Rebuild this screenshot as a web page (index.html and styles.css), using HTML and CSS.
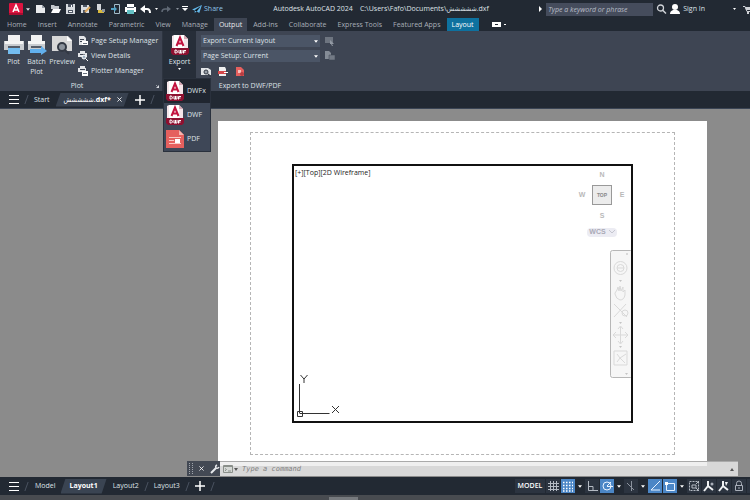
FILE: index.html
```html
<!DOCTYPE html>
<html lang="en">
<head>
<meta charset="utf-8">
<title>Autodesk AutoCAD 2024</title>
<link rel="stylesheet" href="styles.css">
</head>
<body>
<svg class="defs" aria-hidden="true">
  <symbol id="caret" viewBox="0 0 6 4"><path fill="currentColor" d="M0 0h6L3 4z"/></symbol>
  <symbol id="printer" viewBox="0 0 20 20"><path fill="#f2f2f2" d="M4 0h12v7H4z"/><path fill="#c9ccd0" d="M0 6h20v9H0z"/><path fill="#f4f4f4" d="M1 6h18v3H1z"/><path fill="#555c68" d="M4 11h12v2H4z"/><path fill="#74bdf0" d="M4 13h12v6H4z"/></symbol>
  <symbol id="batch" viewBox="0 0 20 20"><path fill="#f2f2f2" d="M4 0h11v6H4z"/><path fill="#c9ccd0" d="M1 6h17v9H1z"/><path fill="#f4f4f4" d="M1 6h17v3H1z"/><path fill="#555c68" d="M4 11h11v2H4z"/><path fill="#62b0ed" d="M3 14h11v-3l6 5-6 4v-2H3z"/></symbol>
  <symbol id="preview" viewBox="0 0 20 20"><path fill="#d8d8d8" d="M0 1h16l4 4v11H0z"/><path fill="#fff" d="M15 1l5 5h-5z"/><circle cx="10" cy="12" r="4" fill="#8c939c" stroke="#343a45" stroke-width="2"/><path stroke="#343a45" stroke-width="2" d="M13 15l4 4"/></symbol>
  <symbol id="pagesetup" viewBox="0 0 10 10"><path fill="#e3e5e8" d="M1 0h5l2 2v7H1z"/><path fill="#3e4553" d="M2 3h4v1H2zM2 5h2v1H2z"/><path fill="#fff" d="M4 5h6v4H4z"/><path fill="#6b7380" d="M5 7h4v1H5z"/></symbol>
  <symbol id="details" viewBox="0 0 10 10"><path fill="#e3e5e8" d="M2 0h5v2h2v4H0V2h2z"/><path fill="#3e4553" d="M2 3h5v1H2z"/><circle cx="6" cy="6" r="2" fill="#9fb0c0" stroke="#fff"/><path stroke="#fff" d="M7.500 7.500L10 10"/></symbol>
  <symbol id="plotter" viewBox="0 0 10 10"><path fill="#e3e5e8" d="M2 0h5v2h1v4H0V2h2z"/><path fill="#3e4553" d="M2 3h5v1H2z"/><path fill="#fff" d="M4 5h6v5H4z"/><path fill="#6b7380" d="M5 7h4v1H5z"/></symbol>
  <symbol id="dwf" viewBox="0 0 18 20"><path fill="#f6e6ea" d="M1 1l2-1h10l4 4v11H1z"/><path fill="#fff" d="M3 0h10v13H3z"/><path fill="#d9a9b5" d="M13 0l4 4h-4z"/><path fill="none" stroke="#c3123f" stroke-width="2" d="M5.500 11L9 2.500l3.500 8.500M6.500 8.500h5"/><path fill="#8d1030" d="M0 13h18v5l-2 2H2l-2-2z"/><path fill="none" stroke="#fff" d="M4 15v3h1.500l1-1-1-2zM8 15v3h3v-3M9.500 15v3M15 15.500h-2.500V18.500M12.500 17h2"/></symbol>
  <symbol id="pdf" viewBox="0 0 18 20"><path fill="#e5605e" d="M0 1h13l5 5v13H0z"/><path fill="#f7b3ae" d="M13 1l5 5h-5z"/><path stroke="#f9c9c5" d="M3 8.500h12M3 11.500h5M3 14.500h12"/><path fill="#fff" d="M9 10h5v4H9z"/></symbol>
  <symbol id="plus" viewBox="0 0 10 10"><path stroke="currentColor" stroke-width="1.500" d="M5 0v10M0 5h10"/></symbol>
  <symbol id="burger" viewBox="0 0 10 9"><path stroke="currentColor" d="M0 .5h10M0 4.500h10M0 8.500h10"/></symbol>
  <symbol id="cross" viewBox="0 0 6 6"><path stroke="currentColor" d="M.5.5l5 5M5.500.5l-5 5"/></symbol>
</svg>

<header class="titlebar">
  <div class="quick">
    <button class="logo" aria-label="Application menu"><svg viewBox="0 0 14 12"><rect width="14" height="12" rx="1" fill="#dc1440"/><path fill="#a90d30" d="M0 10h14v2H0z"/><path fill="none" stroke="#fff" stroke-width="1.500" d="M4 9l3-7 3 7M5 7h4"/></svg></button>
    <svg class="tiny"><use href="#caret"/></svg>
    <button class="qb" aria-label="New"><svg viewBox="0 0 11 10"><path fill="#e9ebed" d="M1 1h6l3 3v5H1z"/><path fill="#9aa1aa" d="M7 1l3 3H7z"/></svg></button>
    <button class="qb" aria-label="Open"><svg viewBox="0 0 11 10"><path fill="#c4c8cd" d="M1 1h3l1 1h4v3H1z"/><path fill="#fff" d="M3 5h8L9 9H1z"/></svg></button>
    <button class="qb" aria-label="Save"><svg viewBox="0 0 11 10"><path fill="#d8dbdf" d="M1 0h9v10H1z"/><path fill="#4e5663" d="M3 0h5v3H3zM3 6h5v3H3z"/><path fill="#fff" d="M6 1h1v2H6zM4 7h3v1H4z"/></svg></button>
    <button class="qb" aria-label="Save As"><svg viewBox="0 0 11 10"><path fill="#d8dbdf" d="M1 1h8v8H1z"/><path fill="#4e5663" d="M3 1h4v2H3zM3 6h3v3H3z"/><path stroke="#dda85e" stroke-width="2" d="M5 8l5-5"/></svg></button>
    <button class="qb" aria-label="Open from web"><svg viewBox="0 0 11 10"><path fill="#d5d7db" d="M2 0h4v6H2z"/><path fill="#d9ba3e" d="M3 6h6v3H3z"/><path fill="#8c939d" d="M7 5h3v3H7z"/></svg></button>
    <button class="qb" aria-label="Save to mobile"><svg viewBox="0 0 11 10"><path fill="none" stroke="#a5bcc9" d="M4.500.5h5v9h-5z"/><path fill="#55a3c5" d="M1 4h3V2l3 3-3 3V6H1z"/></svg></button>
    <button class="qb" aria-label="Print"><svg viewBox="0 0 11 10"><path fill="#fff" d="M2 0h7v3h2v5H0V3h2z"/><path fill="#59616d" d="M2 3h7v1H2z"/><path fill="#64c1c4" d="M2 6h7v4H2z"/></svg></button>
    <button class="qb" aria-label="Undo"><svg viewBox="0 0 11 10"><path fill="#fff" d="M5 1v8L0 5z"/><path fill="none" stroke="#fff" stroke-width="2" d="M4 5h3q3 0 3 4"/></svg></button>
    <svg class="dotcaret"><use href="#caret"/></svg>
    <button class="qb" aria-label="Redo"><svg viewBox="0 0 11 10"><path fill="#606975" d="M6 2v6l4-3z"/><path fill="none" stroke="#606975" stroke-width="1.500" d="M7 5H4Q1 5 1 8"/></svg></button>
    <svg class="dotcaret dim"><use href="#caret"/></svg>
    <button class="qb more" aria-label="Customize"><svg viewBox="0 0 6 6"><path fill="#fff" d="M0 0h6v1H0zM0 2h6L3 5z"/></svg></button>
    <button class="share"><svg viewBox="0 0 11 10"><path fill="#64b9eb" d="M0 5l11-5-3 9-3-2-2 2V6z"/><path stroke="#222933" stroke-width=".6" d="M3 6l6-4-4 5"/></svg>Share</button>
  </div>
  <h1 class="title"><span>Autodesk AutoCAD 2024</span><span dir="ltr">C:\Users\Fafo\Documents\ششششش.dxf</span></h1>
  <div class="account">
    <svg class="next" viewBox="0 0 3 6"><path fill="#fff" d="M0 0l3 3-3 3z"/></svg>
    <input class="search" type="search" aria-label="Search" placeholder="Type a keyword or phrase">
    <button class="qb" aria-label="Search"><svg viewBox="0 0 11 10"><circle cx="4.500" cy="4" r="3" fill="none" stroke="#d0d3d8" stroke-width="1.300"/><path stroke="#d0d3d8" stroke-width="1.500" d="M6.500 6L10 9.500"/></svg></button>
    <button class="signin"><svg viewBox="0 0 10 10"><circle cx="5" cy="3" r="3" fill="#fff"/><path fill="#fff" d="M0 10q0-3 3-4h4q3 1 3 4z"/></svg>Sign In</button>
    <svg class="dotcaret"><use href="#caret"/></svg>
    <svg class="cart" viewBox="0 0 7 9"><path fill="none" stroke="#d0d3d8" d="M0 1.500h2L4 6.500h3"/><path fill="#d0d3d8" d="M2 2h5v3H3zM4 7h2v2H4z"/></svg>
  </div>
</header>

<nav class="tabs">
  <button>Home</button><button>Insert</button><button>Annotate</button><button>Parametric</button><button>View</button><button>Manage</button><button class="on">Output</button><button>Add-ins</button><button>Collaborate</button><button>Express Tools</button><button>Featured Apps</button><button class="context">Layout</button>
  <button class="state" aria-label="Minimize ribbon"><svg viewBox="0 0 14 5"><path fill="#fff" d="M0 0h9v5H0zM12 2h2v1h-2z"/><path fill="#222933" d="M3 2h3v1H3z"/></svg></button>
</nav>

<section class="ribbon">
  <div class="panel plot">
    <div class="tools">
      <button class="big"><svg viewBox="0 0 20 20"><use href="#printer"/></svg>Plot</button>
      <button class="big"><svg viewBox="0 0 20 20"><use href="#batch"/></svg>Batch<br>Plot</button>
      <button class="big wide"><svg viewBox="0 0 20 20"><use href="#preview"/></svg>Preview</button>
      <div class="stack">
        <button><svg><use href="#pagesetup"/></svg>Page Setup Manager</button>
        <button><svg><use href="#details"/></svg>View Details</button>
        <button><svg><use href="#plotter"/></svg>Plotter Manager</button>
      </div>
    </div>
    <div class="caption"><span>Plot</span><svg class="launch" viewBox="0 0 4 4"><path fill="#d9dce1" d="M4 0v4H0zM0 0h1v1H0z"/></svg></div>
  </div>
  <div class="panel export">
    <div class="exportbox">
      <button class="exportbtn" aria-expanded="true"><svg class="fmt"><use href="#dwf"/></svg>Export<svg class="dotcaret"><use href="#caret"/></svg></button>
      <div class="menu">
        <button class="on"><svg class="fmt"><use href="#dwf"/></svg>DWFx</button>
        <button><svg class="fmt"><use href="#dwf"/></svg>DWF</button>
        <button><svg class="fmt"><use href="#pdf"/></svg>PDF</button>
      </div>
    </div>
    <div class="fields">
      <div class="field"><span class="pick"><select aria-label="Export area"><option>Export: Current layout</option></select><svg><use href="#caret"/></svg></span><svg class="aux" viewBox="0 0 11 10"><path fill="#6e7580" d="M1 1h8v6H1z"/><path fill="#9299a3" d="M6 4l4 4H8l1 2H8L7 8H6z"/></svg></div>
      <div class="field"><span class="pick"><select aria-label="Page setup"><option>Page Setup: Current</option></select><svg><use href="#caret"/></svg></span><svg class="aux" viewBox="0 0 11 10"><path fill="#858c96" d="M1 0h4l2 2v6H1z"/><path fill="#737a85" stroke="#3e4553" stroke-width=".5" d="M5 4h6v5H5z"/></svg></div>
      <div class="minis">
        <button aria-label="Preview export"><svg viewBox="0 0 10 10"><path fill="#e3e5e8" d="M0 1h7l3 2v5H0z"/><circle cx="5" cy="5" r="2" fill="#9aa1aa" stroke="#343a45"/><path stroke="#343a45" stroke-width="1.500" d="M7 7l3 3"/></svg></button>
        <button aria-label="Export options"><svg viewBox="0 0 10 10"><path fill="#f0f0f0" d="M1 0h6l1 2v2H1zM1 6h7v3H1z"/><path fill="#d5484b" d="M0 4h8v3H0z"/><path fill="#fff" d="M6 5h4v1H6z"/></svg></button>
        <button aria-label="PDF options"><svg viewBox="0 0 10 10"><path fill="#e5605e" d="M1 0h5l3 3v6H1z"/><path fill="#f7c1bd" d="M3 3h3v3H3z"/><circle cx="7" cy="7" r="2" fill="#b73d42"/></svg></button>
      </div>
      <div class="caption"><span>Export to DWF/PDF</span></div>
    </div>
  </div>
</section>

<nav class="files">
  <button aria-label="Menu"><svg class="burger"><use href="#burger"/></svg></button>
  <i class="slash"></i>
  <button class="start">Start</button>
  <div class="doc"><span dir="ltr">ششششش<b>.dxf*</b></span><button aria-label="Close drawing"><svg class="cross"><use href="#cross"/></svg></button></div>
  <button class="add" aria-label="New drawing"><svg class="plus"><use href="#plus"/></svg></button>
  <i class="slash"></i>
</nav>

<main class="canvas">
  <div class="paper">
    <div class="margin">
      <div class="viewport">
        <span class="vlabel">[+][Top][2D Wireframe]</span>
        <div class="cube">
          <span class="n">N</span><span class="w">W</span><button class="face">TOP</button><span class="e">E</span><span class="s">S</span>
          <button class="wcs">WCS<svg viewBox="0 0 6 4"><path fill="none" stroke="#c5c6d0" d="M0 0l3 3 3-3"/></svg></button>
        </div>
        <svg class="navbar" viewBox="0 0 21 128"><rect x=".5" y=".5" width="22" height="127" rx="2" fill="#f6f6f6" stroke="#b7b7b7"/><g fill="none" stroke="#d9d9d9"><circle cx="10.500" cy="18" r="6.500"/><circle cx="10.500" cy="18" r="3.500"/><path d="M7 18h7M16 3l2 2M18 3l-2 2M5 43l2-3 1-3 1 4 1-5 1 5 2-4v5l2-2v5q-1 5-5 5-4-1-5-6zM4 54l13 13M16 54L4 67M10.500 77v16M3 85h15M8 79l2.500-3 2.500 3M8 91l2.500 3 2.500-3M6 82l-3 3 3 3M15 82l3 3-3 3M4 101h13v14H4zM7 104l3 4-3 4M10 108l6-4M10 108l5 5"/><circle cx="15" cy="63" r="3"/></g><path fill="#c5c5c5" d="M9 30h3l-1.500 2zM9 72h3l-1.500 2zM9 96h3l-1.500 2zM15 123h3l-1.500 2z"/></svg>
        <svg class="ucs" viewBox="0 0 48 44"><path fill="none" stroke="#333" d="M5.500 10v29M5.500 39.500h30M3.500 37.500h5v5h-5zM6.500 1l3.500 4 3.500-4M10 5v4M38 32l7 7M45 32l-7 7"/></svg>
      </div>
    </div>
  </div>
  <div class="command">
    <div class="handle"><svg class="grip" viewBox="0 0 4 11"><path stroke="#a0a5ad" stroke-dasharray="1 1" d="M.5 0v11M3.500 0v11"/></svg><button aria-label="Close"><svg class="cross"><use href="#cross"/></svg></button><button aria-label="Customize command line"><svg class="wrench" viewBox="0 0 10 10"><path stroke="#e8eaed" stroke-width="2" d="M1 9l5-5"/><path fill="none" stroke="#e8eaed" stroke-width="1.500" d="M7 1Q5 2 6 4q2 1 3-1"/></svg></button></div>
    <label class="entry"><svg viewBox="0 0 15 8"><path fill="#d5d8d5" stroke="#8a8f8a" d="M.5.5h9v7h-9z"/><path stroke="#8a8f8a" fill="none" d="M0 1.500h10M2 3.500l1.500 1L2 6M5 6h3"/><path fill="#555" d="M11 3h4l-2 3z"/></svg><input type="text" aria-label="Command" placeholder="Type a command"><svg class="up" viewBox="0 0 4 3"><path fill="#555" d="M0 3l2-3 2 3z"/></svg></label>
  </div>
</main>

<footer class="status">
  <nav class="layouts">
    <button aria-label="Layouts"><svg class="burger"><use href="#burger"/></svg></button>
    <i class="slash"></i>
    <button>Model</button>
    <button class="on"><span>Layout1</span></button>
    <button>Layout2</button>
    <i class="slash"></i>
    <button>Layout3</button>
    <i class="slash"></i>
    <button aria-label="New layout"><svg class="plus"><use href="#plus"/></svg></button>
    <i class="slash"></i>
  </nav>
  <div class="toggles">
    <button class="model">MODEL</button>
    <button aria-label="Grid"><svg viewBox="0 0 12 12"><path stroke="#b4bac3" d="M3.500 1v10M6.500 1v10M9.500 1v10M1 3.500h11M1 6.500h11M1 9.500h11"/></svg></button>
    <button class="on" aria-label="Snap"><svg viewBox="0 0 12 12"><path stroke="#fff" stroke-width="1.500" stroke-dasharray="1.500 1.500" d="M1 2.500h10M1 5.500h10M1 8.500h10M1 11h10"/></svg></button>
    <svg class="drop"><use href="#caret"/></svg>
    <button aria-label="Ortho"><svg viewBox="0 0 12 12"><path fill="none" stroke="#b4bac3" d="M2.500 1v9.500H12M3 6.500h4v4"/></svg></button>
    <button class="on" aria-label="Polar"><svg viewBox="0 0 12 12"><circle cx="6" cy="6" r="4" fill="none" stroke="#e8f2ff"/><path fill="none" stroke="#e8f2ff" d="M6 6.500h6M6 6l4-4"/></svg></button>
    <svg class="drop"><use href="#caret"/></svg>
    <button aria-label="Isodraft"><svg viewBox="0 0 12 12"><path stroke="#8b929d" d="M2 3l7 7M6.500 1v10"/></svg></button>
    <svg class="drop"><use href="#caret"/></svg>
    <button class="on" aria-label="Object tracking"><svg viewBox="0 0 12 12"><path fill="none" stroke="#e8f2ff" d="M11 1L2 10h9"/></svg></button>
    <button class="on" aria-label="Object snap"><svg viewBox="0 0 12 12"><path fill="none" stroke="#e8f2ff" d="M2.500 3.500h8v7h-8z"/><path fill="#fff" d="M1 2h3v3H1z"/></svg></button>
    <svg class="drop"><use href="#caret"/></svg>
    <button aria-label="Selection"><svg viewBox="0 0 12 12"><path fill="none" stroke="#b4bac3" stroke-dasharray="2 1" d="M1.500 1.500h9v9h-9z"/><path fill="none" stroke="#b4bac3" d="M4 5h4v3H4zM8 8l3 3M8 4l3-3"/></svg></button>
    <button aria-label="Annotation visibility"><svg viewBox="0 0 12 12"><path fill="none" stroke="#f0f2f4" stroke-width="2" d="M5 1v5l-4 5M5 6l5 4"/><circle cx="9" cy="4" r="1.500" fill="#a9afb9"/></svg></button>
    <button aria-label="Auto scale"><svg viewBox="0 0 12 12"><path fill="none" stroke="#f0f2f4" stroke-width="2" d="M5 1v5l-4 5M5 6l5 4"/><path fill="#f0f2f4" d="M7 2h3L8 6z"/></svg></button>
    <button aria-label="Lock"><svg viewBox="0 0 12 12"><path fill="none" stroke="#a9afb9" d="M3.500 5V3.500q0-2.500 2.500-2.500t2.500 2.500V5M2.500 5.500h7v5h-7zM6 7v2"/></svg></button>
    <i class="edge"></i>
  </div>
</footer>
<div class="scroll"><span></span></div>
</body>
</html>
```
FILE: styles.css
```css
* { box-sizing: border-box; }
html, body { height: 100%; }
body {
  margin: 0;
  display: flex;
  flex-direction: column;
  overflow: hidden;
  background: #222933;
  color: #dfe2e7;
  font: 7px/10px "Open Sans", "DejaVu Sans Condensed", "DejaVu Sans", sans-serif;
  white-space: nowrap;
}
button, input, select {
  margin: 0;
  padding: 0;
  border: 0;
  background: none;
  color: inherit;
  font: inherit;
}
svg { display: block; flex: none; }
button svg { pointer-events: none; }
.defs { position: absolute; width: 0; height: 0; }

/* title bar */
.titlebar { display: flex; align-items: center; height: 18px; flex: none; }
.quick, .account { display: flex; align-items: center; }
.quick { padding-left: 9px; }
.logo svg { width: 14px; height: 12px; }
.tiny { width: 4px; height: 3px; margin: 0 5px 0 3px; }
.qb { width: 11px; margin-right: 4px; }
.qb svg { width: 11px; height: 10px; }
.dotcaret { width: 3px; height: 2px; color: #fff; margin-right: 4px; }
.dim { color: #8b929c; }
.qb.more { width: 6px; }
.qb.more svg { width: 6px; height: 6px; }
.share { display: flex; align-items: center; gap: 2px; color: #8fc4ea; }
.quick .dotcaret { margin-right: 3px; }
.share svg { width: 10px; height: 9px; }
.title { display: flex; gap: 7px; margin: 0 auto; font-size: 7px; font-weight: 400; }
.next { width: 3px; height: 6px; margin-right: 4px; }
.search {
  width: 107px;
  height: 13px;
  margin-right: 3px;
  padding: 0 2px;
  background: #454c5c;
  font-style: italic;
  appearance: none;
}
.search::placeholder { color: #b9bec7; opacity: 1; }
.account .qb { margin-right: 3px; }
.signin { display: flex; align-items: center; gap: 3px; margin-right: 28px; }
.signin svg { width: 10px; height: 10px; }
.account .dotcaret { margin-right: 7px; }
.cart { width: 7px; height: 9px; }

/* ribbon tabs */
.tabs { display: flex; height: 13px; flex: none; padding-left: 2px; color: #a9afb8; }
.tabs button { padding: 1px 5px 0; margin-right: 1px; }
.tabs .on { background: #3e4553; color: #e8eaee; }
.tabs .context { background: #0e719f; color: #fff; }
.tabs .state { padding: 0 12px; }
.state svg { width: 14px; height: 5px; }

/* ribbon */
.ribbon { display: flex; height: 60px; flex: none; background: #3e4553; }
.panel { display: flex; }
.plot { flex-direction: column; width: 163px; border-right: 1px solid #2d3440; }
.tools { display: flex; height: 50px; padding: 4px 0 0 2px; }
.big { display: flex; flex-direction: column; align-items: center; width: 23px; }
.big svg { width: 20px; height: 20px; margin-bottom: 2px; }
.big.wide { width: 28px; }
.stack { display: flex; flex-direction: column; gap: 5px; padding: 1px 0 0 2px; }
.stack button { display: flex; align-items: center; gap: 3px; height: 10px; }
.stack svg { width: 10px; height: 10px; }
.caption { display: flex; align-items: center; justify-content: center; height: 10px; }
.plot .caption { position: relative; padding-right: 8px; }
.launch { position: absolute; right: 3px; width: 3px; height: 3px; }
.exportbox { position: relative; width: 33px; }
.exportbtn {
  display: flex;
  flex-direction: column;
  align-items: center;
  width: 33px;
  height: 47px;
  padding-top: 4px;
  background: #272e39;
}
.exportbtn .dotcaret { margin: 1px 0 0; }
.fmt { width: 18px; height: 20px; }
.exportbtn .fmt { margin-bottom: 2px; }
.menu {
  position: absolute;
  z-index: 2;
  top: 47px;
  left: 0;
  width: 48px;
  background: #3e4757;
  border: 1px solid #2a313d;
}
.menu button { display: flex; align-items: center; gap: 3px; width: 100%; height: 24px; padding-left: 2px; }
.menu .on { background: #202630; }
.fields { display: flex; flex-direction: column; padding: 4px 0 0 5px; }
.field { display: flex; align-items: center; gap: 4px; height: 12px; margin-bottom: 3px; }
.pick { position: relative; width: 119px; }
.pick select { display: block; width: 100%; height: 12px; padding: 0 2px; background: #4b5566; appearance: none; }
.pick svg { position: absolute; right: 2px; top: 5px; width: 4px; height: 3px; color: #fff; pointer-events: none; }
.aux { width: 11px; height: 10px; }
.minis { display: flex; gap: 7px; height: 16px; align-items: center; padding-bottom: 2px; }
.minis svg { width: 10px; height: 10px; }
.export .caption { width: 98px; }

/* drawing tabs */
.files { display: flex; align-items: center; height: 18px; flex: none; padding-left: 9px; border-bottom: 1px solid #3b4555; }
.burger { width: 10px; height: 9px; color: #fff; }
.slash { width: 1px; height: 9px; margin: 0 7px; background: #4a5260; transform: skewX(-20deg); }
.plus { width: 10px; height: 10px; color: #fff; }
.cross { width: 5px; height: 5px; }
.start { margin-right: 6px; }
.doc {
  display: flex;
  align-items: center;
  gap: 6px;
  height: 14px;
  padding: 0 7px 0 8px;
  background: #38414f;
  clip-path: polygon(5px 0, 100% 0, calc(100% - 5px) 100%, 0 100%);
  color: #fff;
}
.add { margin-left: 6px; }

/* drawing area */
.canvas {
  position: relative;
  display: flex;
  flex: 1;
  min-height: 0;
  padding: 12px 43px 11px 218px;
  background: #8b8b8b;
}
.paper { flex: 1; display: flex; padding: 11px 32px; background: #fff; }
.margin { flex: 1; display: flex; padding: 31px 41px; border: 1px dashed #b5b5b5; }
.viewport { position: relative; flex: 1; padding: 2px 1px; border: 2px solid #111; color: #222; }
.vlabel { display: block; }
.cube {
  position: absolute;
  top: 4px;
  right: 4px;
  display: grid;
  grid-template: 10px 30px 12px 20px / 10px 30px 10px;
  place-items: center;
  color: #b9b9b9;
  font: bold 7px/8px "Liberation Sans", sans-serif;
}
.n, .s { grid-column: 1 / 4; }
.w { grid-column: 1; }
.face { width: 20px; height: 20px; border: 1px solid #999; background: #ececec; color: #888; font-size: 5px; }
.wcs { grid-column: 1 / 4; display: flex; align-items: center; gap: 3px; height: 9px; padding: 0 2px; border-radius: 4px; background: #ececf3; color: #a9a9b6; }
.wcs svg { width: 6px; height: 4px; }
.navbar { position: absolute; right: 0; top: 84px; width: 21px; height: 128px; }
.ucs { position: absolute; left: 0; bottom: 3px; width: 48px; height: 44px; }

/* command line */
.command { position: absolute; left: 187px; right: 12px; bottom: 1px; display: flex; height: 15px; }
.handle { display: flex; align-items: center; gap: 6px; width: 33px; padding-left: 2px; background: #434954; color: #fff; }
.grip { width: 4px; height: 11px; }
.wrench { width: 10px; height: 10px; }
.entry { display: flex; flex: 1; align-items: center; padding: 0 4px 0 3px; background: rgba(235, 235, 235, .8); border-top: 1px solid #aaa; }
.entry svg { width: 15px; height: 8px; }
.entry .up { width: 4px; height: 3px; }
.entry input { flex: 1; min-width: 0; padding-left: 4px; font: italic 7px/10px "DejaVu Sans Mono", monospace; color: #555; }
.entry input::placeholder { color: #808080; opacity: 1; }

/* status bar */
.status { display: flex; align-items: center; justify-content: space-between; height: 18px; flex: none; }
.layouts { display: flex; align-items: center; padding-left: 9px; }
.layouts .on {
  height: 15px;
  margin: 0 6px 0 5px;
  padding: 0 9px;
  background: #3a4452;
  clip-path: polygon(5px 0, 100% 0, calc(100% - 5px) 100%, 0 100%);
  color: #fff;
  font-weight: 700;
}
.layouts .slash:first-of-type { margin-right: 8px; }
.toggles { display: flex; align-items: center; gap: 1px; }
.toggles button { display: flex; align-items: center; justify-content: center; width: 14px; height: 14px; background: #2c3440; }
.toggles .model { width: 30px; color: #fff; font-weight: 600; }
.toggles button svg { width: 12px; height: 12px; }
.toggles .on { background: #4b86c6; }
.drop { width: 4px; height: 3px; margin: 0 2px; color: #fff; }
.toggles .drop { margin: 0 2px; }
.edge { width: 3px; height: 14px; background: #2c3440; }
.scroll { display: flex; justify-content: center; height: 5px; flex: none; padding: 2px 64px 0 0; background: #484b50; }
.scroll span { width: 29px; background: #777a7e; }
```
